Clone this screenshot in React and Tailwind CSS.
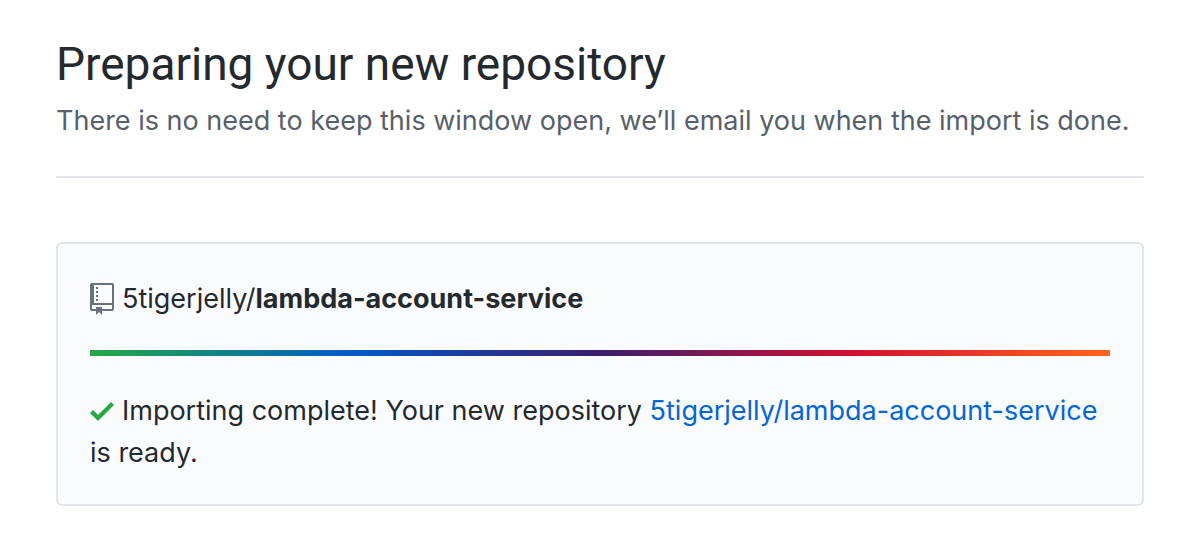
export default function App() {
  return (
    <main className="min-h-screen bg-white pl-14 pr-11 pt-8 pb-10 font-['Inter','Liberation_Sans',sans-serif] text-[#24292e]">
      <header className="border-b-2 border-[#e1e4e8] pb-[30px]">
        <h1 className="font-['Roboto','Inter',sans-serif] text-[46px] leading-[64px]">Preparing your new repository</h1>
        <p className="text-[27px] leading-[50px] text-[#586069]">
          There is no need to keep this window open, we’ll email you when the import is done.
        </p>
      </header>
      <section className="mt-16 rounded-md border-2 border-[#e1e4e8] bg-[#fafbfc] px-8 pt-[34px] pb-[30px]">
        <h2 className="text-[27px] leading-[42px]">
          <svg className="mr-2 inline-block h-8 w-6 align-text-bottom" viewBox="0 0 12 16" fill="#6a737d" aria-hidden="true">
            <path fillRule="evenodd" d="M4 9H3V8h1v1zm0-3H3v1h1V6zm0-2H3v1h1V4zm0-2H3v1h1V2zm8-1v12c0 .55-.45 1-1 1H6v2l-1.5-1.5L3 16v-2H1c-.55 0-1-.45-1-1V1c0-.55.45-1 1-1h10c.55 0 1 .45 1 1zm-1 10H1v2h2v-1h3v1h5v-2zm0-10H2v9h9V1z" />
          </svg>
          5tigerjelly/<strong className="font-bold">lambda-account-service</strong>
        </h2>
        <div role="progressbar" aria-label="Import progress" aria-valuenow={100} className="mt-[30px] h-1.5 bg-[linear-gradient(to_right,#28a745_0%,#005cc5_25%,#3a1d6e_50%,#d0112f_75%,#ff6620_100%)]" />
        <p className="mt-[34px] text-[27px] leading-[42px]">
          <svg className="mr-2 inline-block h-8 w-6 align-text-bottom" viewBox="0 0 12 16" fill="#28a745" aria-hidden="true">
            <path fillRule="evenodd" d="M12 5l-8 8-4-4 1.5-1.5L4 10l6.5-6.5L12 5z" />
          </svg>
          Importing complete! Your new repository{" "}
          <a href="#repository" className="text-[#0366d6]">5tigerjelly/lambda-account-service</a> is ready.
        </p>
      </section>
    </main>
  );
}
